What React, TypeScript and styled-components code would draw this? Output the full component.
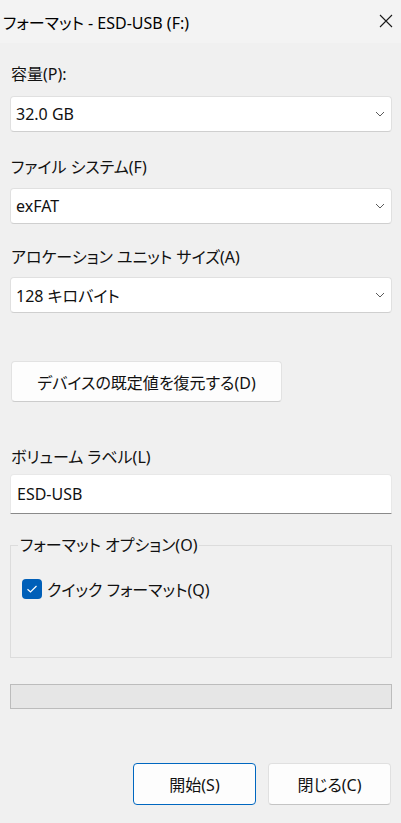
import React from 'react';
import styled, { createGlobalStyle } from 'styled-components';

const GlobalStyle = createGlobalStyle`
  html, body {
    margin: 0;
    padding: 0;
    background: #f0f0f0;
  }
  body {
    font-family: "Noto Sans", "Noto Sans CJK JP", sans-serif;
    font-feature-settings: "palt";
    color: #111;
  }
  button {
    font-feature-settings: "palt";
  }
`;

const Window = styled.div`
  width: 401px;
  height: 823px;
  display: flex;
  flex-direction: column;
  background: #f0f0f0;
  overflow: hidden;
`;

const TitleBar = styled.div`
  height: 43px;
  display: flex;
  align-items: center;
  justify-content: space-between;
  background: #f3f3f3;
  padding-left: 3px;
  box-sizing: border-box;
`;

const Title = styled.span`
  font-size: 16px;
  color: #000;
`;

const CloseButton = styled.button`
  width: 46px;
  height: 43px;
  border: none;
  background: transparent;
  display: flex;
  align-items: center;
  justify-content: center;
  padding: 0 0 2px 0;
  margin-right: -8px;
`;

const Body = styled.div`
  display: flex;
  flex-direction: column;
  padding: 0 9px 0 10px;
`;

const Label = styled.div<{ $top: number }>`
  margin-top: ${(p) => p.$top}px;
  height: 24px;
  line-height: 24px;
  font-size: 16px;
  padding-left: 1px;
`;

const Select = styled.div<{ $top: number }>`
  margin-top: ${(p) => p.$top}px;
  height: 36px;
  box-sizing: border-box;
  background: #fff;
  border: 1px solid #e0e0e0;
  border-bottom-color: #cfcfcf;
  border-radius: 4px;
  display: flex;
  align-items: center;
  justify-content: space-between;
  padding: 0 6px 0 5px;
  font-size: 16px;
`;

const Chevron = () => (
  <svg width="10" height="6" viewBox="0 0 10 6" fill="none">
    <path d="M1 1 L5 5 L9 1" stroke="#5a5a5a" strokeWidth="1" />
  </svg>
);

const DefaultButton = styled.button`
  margin-top: 48px;
  width: 271px;
  height: 41px;
  margin-left: 1px;
  background: #fdfdfd;
  border: 1px solid #e2e2e2;
  border-bottom-color: #cccccc;
  border-radius: 4px;
  font-family: inherit;
  font-size: 16px;
  color: #111;
`;

const TextInput = styled.div`
  margin-top: 5px;
  height: 40px;
  box-sizing: border-box;
  background: #fff;
  border: 1px solid #e8e8e8;
  border-bottom: 1px solid #8a8a8a;
  border-radius: 4px 4px 0 0;
  display: flex;
  align-items: center;
  padding-left: 6px;
  font-size: 16px;
`;

const GroupBox = styled.fieldset`
  margin: 20px 0 0 0;
  height: 124px;
  box-sizing: border-box;
  border: 1px solid #dcdcdc;
  padding: 0 0 0 11px;
  min-width: 0;
`;

const Legend = styled.legend`
  font-size: 16px;
  padding: 0 2px 0 2px;
  margin-left: -4px;
  line-height: 22px;
`;

const CheckRow = styled.label`
  margin-top: 21px;
  display: flex;
  align-items: center;
  gap: 5px;
  font-size: 16px;
`;

const CheckBox = styled.span`
  width: 20px;
  height: 20px;
  border-radius: 4px;
  background: #005fb8;
  display: flex;
  align-items: center;
  justify-content: center;
`;

const Progress = styled.div`
  margin-top: 26px;
  height: 25px;
  box-sizing: border-box;
  background: #e6e6e6;
  border: 1px solid #bcbcbc;
`;

const Footer = styled.div`
  margin-top: 54px;
  display: flex;
  justify-content: flex-end;
  gap: 12px;
  padding-right: 1px;
`;

const DialogButton = styled.button<{ $primary?: boolean }>`
  width: 123px;
  height: 42px;
  background: #fdfdfd;
  border: 1px solid ${(p) => (p.$primary ? '#0067c0' : '#e0e0e0')};
  border-bottom-color: ${(p) => (p.$primary ? '#0067c0' : '#c4c4c4')};
  border-radius: 4px;
  font-family: inherit;
  font-size: 16px;
  color: #111;
`;

const App: React.FC = () => {
  return (
    <Window>
      <GlobalStyle />
      <TitleBar>
        <Title>フォーマット - ESD-USB (F:)</Title>
        <CloseButton aria-label="閉じる">
          <svg width="14" height="14" viewBox="0 0 14 14">
            <path d="M1 1 L13 13 M13 1 L1 13" stroke="#1a1a1a" strokeWidth="1.1" />
          </svg>
        </CloseButton>
      </TitleBar>
      <Body>
        <Label $top={19}>容量(P):</Label>
        <Select $top={10}>
          <span>32.0 GB</span>
          <Chevron />
        </Select>

        <Label $top={23}>ファイル システム(F)</Label>
        <Select $top={9}>
          <span>exFAT</span>
          <Chevron />
        </Select>

        <Label $top={21}>アロケーション ユニット サイズ(A)</Label>
        <Select $top={8}>
          <span>128 キロバイト</span>
          <Chevron />
        </Select>

        <DefaultButton>デバイスの既定値を復元する(D)</DefaultButton>

        <Label $top={43}>ボリューム ラベル(L)</Label>
        <TextInput>ESD-USB</TextInput>

        <GroupBox>
          <Legend>フォーマット オプション(O)</Legend>
          <CheckRow>
            <CheckBox>
              <svg width="12" height="10" viewBox="0 0 12 10" fill="none">
                <path d="M1.5 5.2 L4.5 8 L10.5 2" stroke="#fff" strokeWidth="1.2" />
              </svg>
            </CheckBox>
            クイック フォーマット(Q)
          </CheckRow>
        </GroupBox>

        <Progress />

        <Footer>
          <DialogButton $primary>開始(S)</DialogButton>
          <DialogButton>閉じる(C)</DialogButton>
        </Footer>
      </Body>
    </Window>
  );
};

export default App;
